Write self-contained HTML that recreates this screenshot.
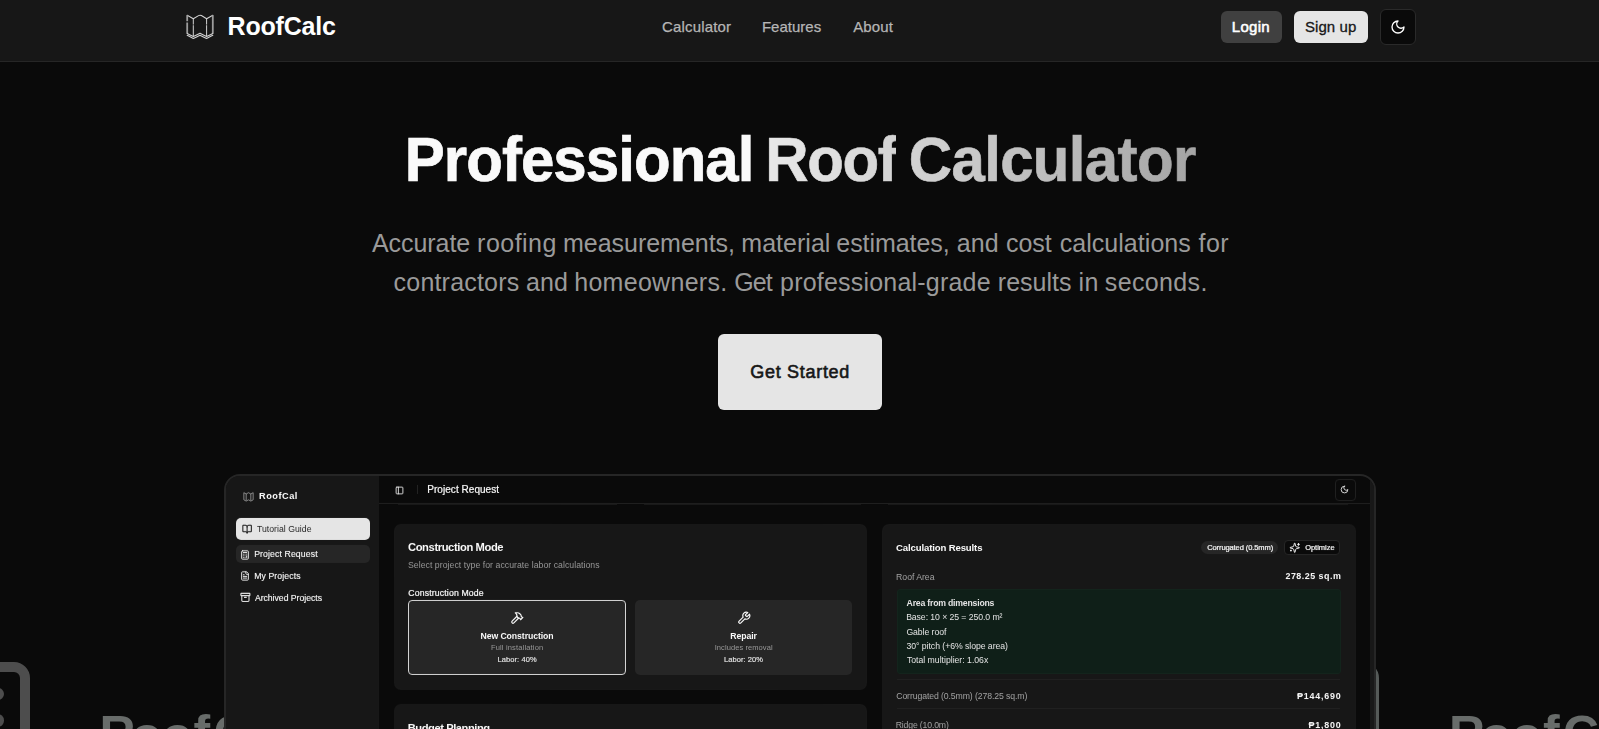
<!DOCTYPE html>
<html><head><meta charset="utf-8">
<style>
*{box-sizing:border-box;margin:0;padding:0}
html,body{width:1599px;height:729px;overflow:hidden;background:#0a0a0a;font-family:"Liberation Sans",sans-serif;color:#fafafa}
.abs{position:absolute}
.t{position:absolute;white-space:nowrap;line-height:1}
#nav{position:absolute;left:0;top:0;width:1599px;height:62px;background:#171717;border-bottom:1px solid #262626}
</style></head>
<body>
<div id="root" style="position:relative;width:1599px;height:729px;overflow:hidden;background:#0a0a0a">
<div id="nav">
  <svg class="abs" style="left:180px;top:8px" width="40" height="36" viewBox="180 8 40 36" fill="none" stroke="#d2d2d2" stroke-width="1.1" stroke-linejoin="round" stroke-linecap="round">
    <path d="M187.2 15.3 L193.3 18.7 L198.6 15.6 Q200 14.8 201.4 15.6 L206.6 18.7 L212.8 15.3"/>
    <path d="M193.3 18.7 V24.2 M193.3 25.6 V35.6 M206.6 18.7 V24.2 M206.6 25.6 V35.6" stroke-width="1"/>
    <path d="M187.2 15.3 V21.2 M187.2 22.6 V33.4 M212.8 15.3 V33.4" stroke="#9c9c9c" stroke-width="1.8" stroke-linecap="butt"/>
    <path d="M187.2 33.4 Q190 35 193.3 36.6 Q196.5 35 200 33.3 Q203.5 35 206.6 36.6 Q210 35 212.8 33.4"/>
    <path d="M187.2 35.3 Q190 36.9 193.3 38.5 Q196.5 36.9 200 35.2 Q203.5 36.9 206.6 38.5 Q210 36.9 212.8 35.3"/>
  </svg>
  <div class="t" id="brand" style="left:227.60px;top:14.2px;font-size:25px;font-weight:bold;color:#fff;letter-spacing:-0.194px">RoofCalc</div>
  <div class="t nl" id="n1" style="left:662.07px;top:19px;letter-spacing:0.155px">Calculator</div>
  <div class="t nl" id="n2" style="left:761.90px;top:19px;letter-spacing:0.017px">Features</div>
  <div class="t nl" id="n3" style="left:853.19px;top:19px;letter-spacing:0.109px">About</div>
  <div class="abs" style="left:1221px;top:11px;width:61px;height:32px;background:#404040;border-radius:6px"></div>
  <div class="t" id="login" style="left:1231.85px;top:19px;font-size:15px;color:#fff;-webkit-text-stroke:0.55px #fff;letter-spacing:0.279px">Login</div>
  <div class="abs" style="left:1294px;top:11px;width:74px;height:32px;background:#e5e5e5;border-radius:6px"></div>
  <div class="t" id="signup" style="left:1304.90px;top:19px;font-size:15px;color:#171717;letter-spacing:0.089px;-webkit-text-stroke:0.3px #171717">Sign up</div>
  <div class="abs" style="left:1380px;top:9px;width:36px;height:36px;background:#0a0a0a;border:1px solid #2a2a2a;border-radius:6px"></div>
  <svg class="abs" style="left:1390px;top:19px" width="16" height="16" viewBox="0 0 24 24" fill="none" stroke="#fff" stroke-width="2" stroke-linecap="round" stroke-linejoin="round"><path d="M12 3a6 6 0 0 0 9 9 9 9 0 1 1-9-9Z"/></svg>
</div>
<style>.nl{font-size:15px;color:#b5b5b5;-webkit-text-stroke:0.25px #b5b5b5}</style>

<div class="t" id="h1a" style="left:404.69px;top:130.6px;font-size:60px;transform:scaleY(1.06);transform-origin:0 50.8px;font-weight:bold;color:#fafafa;letter-spacing:-0.941px;-webkit-text-stroke:0.7px #fafafa">Professional</div>
<div class="t" id="h1b" style="left:765.29px;top:130.6px;font-size:60px;transform:scaleY(1.06);transform-origin:0 50.8px;font-weight:bold;letter-spacing:-1.393px;background:linear-gradient(90deg,#e9e9e9,#d4d4d4);-webkit-background-clip:text;background-clip:text;color:transparent;-webkit-text-stroke:0.7px transparent">Roof</div>
<div class="t" id="h1c" style="left:908.76px;top:130.6px;font-size:60px;transform:scaleY(1.06);transform-origin:0 50.8px;font-weight:bold;letter-spacing:-0.658px;background:linear-gradient(90deg,#d3d3d3,#a5a5a5);-webkit-background-clip:text;background-clip:text;color:transparent;-webkit-text-stroke:0.7px transparent">Calculator</div>

<div class="t sw" id="s1w0" style="left:371.96px;top:230.7px;letter-spacing:-0.058px">Accurate</div>
<div class="t sw" id="s1w1" style="left:477.11px;top:230.7px;letter-spacing:0.465px">roofing</div>
<div class="t sw" id="s1w2" style="left:563.09px;top:230.7px;letter-spacing:-0.035px">measurements,</div>
<div class="t sw" id="s1w3" style="left:741.31px;top:230.7px;letter-spacing:0.027px">material</div>
<div class="t sw" id="s1w4" style="left:836.35px;top:230.7px;letter-spacing:-0.070px">estimates,</div>
<div class="t sw" id="s1w5" style="left:956.68px;top:230.7px;letter-spacing:0.155px">and</div>
<div class="t sw" id="s1w6" style="left:1006.02px;top:230.7px;letter-spacing:-0.047px">cost</div>
<div class="t sw" id="s1w7" style="left:1059.65px;top:230.7px;letter-spacing:0.048px">calculations</div>
<div class="t sw" id="s1w8" style="left:1198.56px;top:230.7px;letter-spacing:0.390px">for</div>
<div class="t sw" id="s2w0" style="left:393.61px;top:270px;letter-spacing:0.189px">contractors</div>
<div class="t sw" id="s2w1" style="left:526.10px;top:270px;letter-spacing:0.018px">and</div>
<div class="t sw" id="s2w2" style="left:574.24px;top:270px;letter-spacing:0.286px">homeowners.</div>
<div class="t sw" id="s2w3" style="left:734.23px;top:270px;letter-spacing:-0.947px">Get</div>
<div class="t sw" id="s2w4" style="left:780.11px;top:270px;letter-spacing:0.199px">professional-grade</div>
<div class="t sw" id="s2w5" style="left:997.80px;top:270px;letter-spacing:0.024px">results</div>
<div class="t sw" id="s2w6" style="left:1078.41px;top:270px;letter-spacing:0.508px">in</div>
<div class="t sw" id="s2w7" style="left:1104.77px;top:270px;letter-spacing:0.367px">seconds.</div>
<style>.sw{font-size:25px;color:#9a9a9a}</style>
<div class="abs" style="left:718px;top:334px;width:164px;height:76px;background:#e5e5e5;border-radius:6px"></div>
<div class="t" id="gs" style="left:750.32px;top:363px;font-size:18px;-webkit-text-stroke:0.6px #171717;color:#171717;letter-spacing:0.697px">Get Started</div>

<!-- marquee bg -->
<div class="abs" style="left:-66px;top:662px;width:96px;height:96px;border:10px solid #4d4d4d;border-radius:16px"></div>
<div class="abs" style="left:-8.8px;top:687.5px;width:12.6px;height:12.6px;border-radius:50%;background:#4d4d4d"></div>
<div class="abs" style="left:-8.8px;top:714px;width:12.6px;height:12.6px;border-radius:50%;background:#4d4d4d"></div>
<div class="abs" style="left:1283px;top:662px;width:96px;height:96px;border:10px solid #555a58;border-radius:16px"></div>

<div class="t mq" id="m10" style="left:99.6px;top:708.9px">R</div>
<div class="t mq" id="m11" style="left:131.6px;top:710px">o</div>
<div class="t mq" id="m12" style="left:162.1px;top:710px">o</div>
<div class="t mq" id="m13" style="left:193.6px">f</div>
<div class="t mq" id="m14" style="left:213.6px;top:708.5px">C</div>
<div class="t mq" id="m15" style="left:249.6px">a</div>
<div class="t mq" id="m20" style="left:1449.0px;top:708.9px">R</div>
<div class="t mq" id="m21" style="left:1481.0px;top:710px">o</div>
<div class="t mq" id="m22" style="left:1511.5px;top:710px">o</div>
<div class="t mq" id="m23" style="left:1543.0px">f</div>
<div class="t mq" id="m24" style="left:1563.0px;top:708.5px">C</div>
<div class="t mq" id="m25" style="left:1599.0px">a</div>
<style>.mq{top:708px;font-size:50px;font-weight:bold;color:#686c6a}</style>
<!-- app card -->
<div id="card" class="abs" style="left:224px;top:474px;width:1152px;height:300px;border:2px solid #262626;border-radius:16px;background:#0a0a0a;overflow:hidden">
<div class="abs" style="left:-226px;top:-476px;width:1599px;height:729px;filter:blur(0.3px);transform:rotate(0.005deg);transform-origin:800px 600px">
  <!-- sidebar -->
  <div class="abs" style="left:226px;top:476px;width:153px;height:260px;background:#171717"></div>
  <div class="abs" style="left:1370px;top:476px;width:4px;height:260px;background:#181818"></div>
  <svg class="abs" style="left:243px;top:492px" width="11" height="10" viewBox="0 0 30 28" fill="none" stroke="#bdbdbd" stroke-width="1.9">
    <path d="M2 2 L8.5 5.5 L15 2 L21.5 5.5 L28 2 V22 L21.5 25.5 L15 22 L8.5 25.5 L2 22 Z"/><path d="M8.5 5.5 V24 M21.5 5.5 V24"/>
  </svg>
  <div class="t" id="sb0" style="left:259.10px;top:492.10px;font-size:9.2px;font-weight:bold;color:#fff;letter-spacing:0.497px">RoofCal</div>
  <div class="abs" style="left:235.5px;top:518px;width:134.5px;height:22px;background:#e5e5e5;border-radius:5px"></div>
  <svg class="abs" style="left:242.4px;top:523.9px" width="10.2" height="10.2" viewBox="0 0 24 24" fill="none" stroke="#171717" stroke-width="2.4" stroke-linecap="round" stroke-linejoin="round"><path d="M12 7v14"/><path d="M3 18a1 1 0 0 1-1-1V4a1 1 0 0 1 1-1h5a4 4 0 0 1 4 4 4 4 0 0 1 4-4h5a1 1 0 0 1 1 1v13a1 1 0 0 1-1 1h-6a3 3 0 0 0-3 3 3 3 0 0 0-3-3z"/></svg>
  <div class="t sbi" id="sb1" style="left:256.93px;top:524.5px;color:#262626;letter-spacing:0.027px">Tutorial Guide</div>
  <div class="abs" style="left:235.5px;top:544.6px;width:134.5px;height:18.8px;background:#262626;border-radius:5px"></div>
  <svg class="abs" style="left:240px;top:549.5px" width="10" height="10" viewBox="0 0 24 24" fill="none" stroke="#e5e5e5" stroke-width="2.4" stroke-linecap="round" stroke-linejoin="round"><rect x="4" y="2" width="16" height="20" rx="2"/><path d="M8 6h8M16 14v4M16 10h.01M12 10h.01M8 10h.01M12 14h.01M8 14h.01M12 18h.01M8 18h.01"/></svg>
  <div class="t sbi" id="sb2" style="left:254.16px;top:550.40px;color:#fafafa;letter-spacing:0.114px;-webkit-text-stroke:0.12px #fafafa">Project Request</div>
  <svg class="abs" style="left:240px;top:570.8px" width="10" height="10" viewBox="0 0 24 24" fill="none" stroke="#e5e5e5" stroke-width="2.4" stroke-linecap="round" stroke-linejoin="round"><path d="M15 2H6a2 2 0 0 0-2 2v16a2 2 0 0 0 2 2h12a2 2 0 0 0 2-2V7Z"/><path d="M14 2v4a2 2 0 0 0 2 2h4M10 9H8M16 13H8M16 17H8"/></svg>
  <div class="t sbi" id="sb3" style="left:254.17px;top:571.5px;color:#fafafa;letter-spacing:0.104px;-webkit-text-stroke:0.12px #fafafa">My Projects</div>
  <svg class="abs" style="left:240.2px;top:592.1px" width="10.8" height="10.8" viewBox="0 0 24 24" fill="none" stroke="#e5e5e5" stroke-width="2.4" stroke-linecap="round" stroke-linejoin="round"><rect width="20" height="5" x="2" y="3" rx="1"/><path d="M4 8v11a2 2 0 0 0 2 2h12a2 2 0 0 0 2-2V8M10 12h4"/></svg>
  <div class="t sbi" id="sb4" style="left:254.88px;top:593.80px;color:#fafafa;letter-spacing:-0.030px;-webkit-text-stroke:0.12px #fafafa">Archived Projects</div>

  <!-- header -->
  <div class="abs" style="left:379px;top:503px;width:991px;height:1px;background:#1e1e1e"></div><div class="abs" style="left:398px;top:504px;width:219px;height:1px;background:#181818"></div><div class="abs" style="left:644px;top:504px;width:217px;height:1px;background:#181818"></div><div class="abs" style="left:888px;top:504px;width:460px;height:1px;background:#181818"></div>
  <svg class="abs" style="left:395px;top:485.5px" width="9" height="9" viewBox="0 0 24 24" fill="none" stroke="#e5e5e5" stroke-width="2.4" stroke-linecap="round" stroke-linejoin="round"><rect width="18" height="18" x="3" y="3" rx="2"/><path d="M9 3v18"/></svg>
  <div class="abs" style="left:417px;top:485px;width:1px;height:9px;background:#222"></div>
  <div class="t" id="hd" style="left:427.29px;top:484.5px;font-size:10px;color:#fafafa;letter-spacing:0.042px;-webkit-text-stroke:0.2px #fafafa">Project Request</div>
  <div class="abs" style="left:1334.5px;top:479px;width:21.5px;height:21.5px;border:1px solid #1f1f1f;border-radius:4px;background:#0a0a0a"></div>
  <svg class="abs" style="left:1340.2px;top:484.8px" width="9" height="9" viewBox="0 0 24 24" fill="none" stroke="#e5e5e5" stroke-width="2.4" stroke-linecap="round" stroke-linejoin="round"><path d="M12 3a6 6 0 0 0 9 9 9 9 0 1 1-9-9Z"/></svg>

  <!-- construction mode card -->
  <div class="abs" style="left:393.5px;top:524px;width:473.5px;height:165.5px;background:#171717;border-radius:7px"></div>
  <div class="t" id="c1" style="left:408.01px;top:541.5px;font-size:11.2px;font-weight:bold;color:#fafafa;letter-spacing:-0.397px">Construction Mode</div>
  <div class="t" id="c2" style="left:407.97px;top:561px;font-size:8.7px;color:#989898;letter-spacing:0.046px">Select project type for accurate labor calculations</div>
  <div class="t" id="c3" style="left:408.28px;top:588.5px;font-size:8.7px;color:#fafafa;letter-spacing:0.153px;-webkit-text-stroke:0.2px #fafafa">Construction Mode</div>
  <div class="abs" style="left:408.3px;top:600px;width:217.4px;height:75px;background:#262626;border:1px solid #d4d4d4;border-radius:4px"></div>
  <svg class="abs" style="left:510.2px;top:611px" width="14" height="14" viewBox="0 0 24 24" fill="none" stroke="#fafafa" stroke-width="2" stroke-linecap="round" stroke-linejoin="round"><path d="m15 12-8.373 8.373a1 1 0 1 1-3-3L12 9"/><path d="m18 15 4-4"/><path d="m21.5 11.500-1.914-1.914A2 2 0 0 1 19 8.172V7l-2.260-2.260a6 6 0 0 0-4.202-1.756L9 2.960l.920.820A6.180 6.180 0 0 1 12 8.400V10l2 2h1.172a2 2 0 0 1 1.414.586L18.500 14.500"/></svg>
  <div class="t" id="b1" style="left:480.44px;top:632px;font-size:8.7px;font-weight:bold;color:#fafafa;letter-spacing:-0.074px">New Construction</div>
  <div class="t" id="b2" style="left:490.96px;top:644px;font-size:7.5px;color:#989898;letter-spacing:0.162px">Full installation</div>
  <div class="t" id="b3" style="left:497.55px;top:656px;font-size:7.5px;color:#e5e5e5;letter-spacing:0.071px;-webkit-text-stroke:0.15px #e5e5e5">Labor: 40%</div>
  <div class="abs" style="left:635px;top:600px;width:217.4px;height:75px;background:#262626;border-radius:5px"></div>
  <svg class="abs" style="left:737px;top:610.6px" width="14" height="14" viewBox="0 0 24 24" fill="none" stroke="#fafafa" stroke-width="2" stroke-linecap="round" stroke-linejoin="round"><path d="M14.700 6.300a1 1 0 0 0 0 1.400l1.600 1.600a1 1 0 0 0 1.400 0l3.770-3.770a6 6 0 0 1-7.940 7.940l-6.910 6.910a2.120 2.120 0 0 1-3-3l6.910-6.910a6 6 0 0 1 7.940-7.940l-3.760 3.760z"/></svg>
  <div class="t" id="r1" style="left:730.25px;top:632px;font-size:8.7px;font-weight:bold;color:#fafafa;letter-spacing:-0.065px">Repair</div>
  <div class="t" id="r2" style="left:714.68px;top:644px;font-size:7.5px;color:#989898;letter-spacing:0.080px">Includes removal</div>
  <div class="t" id="r3" style="left:724.11px;top:656px;font-size:7.5px;color:#e5e5e5;letter-spacing:0.055px;-webkit-text-stroke:0.15px #e5e5e5">Labor: 20%</div>
  <!-- budget card -->
  <div class="abs" style="left:393.5px;top:704px;width:473.5px;height:60px;background:#171717;border-radius:7px"></div>
  <div class="t" id="bp" style="left:407.73px;top:722.5px;font-size:11.2px;font-weight:bold;color:#fafafa;letter-spacing:-0.459px">Budget Planning</div>

  <!-- results card -->
  <div class="abs" style="left:882px;top:524px;width:474px;height:240px;background:#171717;border-radius:7px"></div>
  <div class="t" id="q1" style="left:896.09px;top:542.60px;font-size:9.6px;font-weight:bold;color:#fafafa;letter-spacing:-0.146px">Calculation Results</div>
  <div class="abs" style="left:1200.8px;top:540.8px;width:77px;height:13.2px;background:#262626;border-radius:6.6px"></div>
  <div class="t" id="q2" style="left:1207.18px;top:544px;font-size:7.5px;color:#fafafa;letter-spacing:-0.092px;-webkit-text-stroke:0.2px #fafafa">Corrugated (0.5mm)</div>
  <div class="abs" style="left:1283.7px;top:539.5px;width:56.5px;height:15.5px;background:#0a0a0a;border:1px solid #262626;border-radius:4px"></div>
  <svg class="abs" style="left:1288.8px;top:542.2px" width="11.4" height="11.4" viewBox="0 0 24 24" fill="none" stroke="#fafafa" stroke-width="2" stroke-linecap="round" stroke-linejoin="round"><path d="M9.937 15.500A2 2 0 0 0 8.500 14.063l-6.135-1.582a.5.5 0 0 1 0-.962L8.500 9.936A2 2 0 0 0 9.937 8.500l1.582-6.135a.5.5 0 0 1 .963 0L14.063 8.500A2 2 0 0 0 15.500 9.937l6.135 1.581a.5.5 0 0 1 0 .964L15.500 14.063a2 2 0 0 0-1.437 1.437l-1.582 6.135a.5.5 0 0 1-.963 0z"/><path d="M20 3v4M22 5h-4M4 17v2M5 18H3"/></svg>
  <div class="t" id="q3" style="left:1305.16px;top:544px;font-size:7.5px;color:#fafafa;-webkit-text-stroke:0.2px #fafafa;letter-spacing:-0.020px">Optimize</div>
  <div class="t" id="q4" style="left:896.12px;top:572.80px;font-size:8.7px;color:#a3a3a3;letter-spacing:-0.031px">Roof Area</div>
  <div class="t" id="q5" style="right:257.69px;top:572.40px;font-size:8.9px;font-weight:bold;color:#fafafa;letter-spacing:0.501px">278.25 sq.m</div>
  <div class="abs" style="left:897px;top:589.3px;width:443.8px;height:85px;background:#0f1f18;border:1px solid #13241c;border-radius:3px"></div>
  <div class="t g" id="g1" style="left:906.62px;top:599px;font-weight:bold;letter-spacing:-0.206px">Area from dimensions</div>
  <div class="t g" id="g2" style="left:906.14px;top:613.3px;letter-spacing:-0.074px">Base: 10 × 25 = 250.0 m²</div>
  <div class="t g" id="g3" style="left:906.42px;top:627.6px;letter-spacing:-0.071px">Gable roof</div>
  <div class="t g" id="g4" style="left:906.47px;top:642px;letter-spacing:-0.049px">30° pitch (+6% slope area)</div>
  <div class="t g" id="g5" style="left:906.90px;top:656.3px;letter-spacing:-0.010px">Total multiplier: 1.06x</div>
  <div class="abs" style="left:897px;top:679px;width:443px;height:1px;background:#202020"></div>
  <div class="t" id="w1" style="left:896.23px;top:691.70px;font-size:8.7px;color:#a3a3a3;letter-spacing:-0.100px">Corrugated (0.5mm) (278.25 sq.m)</div>
  <div class="t" id="w2" style="right:257.37px;top:691.70px;font-size:8.9px;font-weight:bold;color:#fafafa;letter-spacing:0.831px">₱144,690</div>
  <div class="abs" style="left:897px;top:708px;width:443px;height:1px;background:#202020"></div>
  <div class="t" id="w3" style="left:895.75px;top:721.00px;font-size:8.7px;color:#a3a3a3;letter-spacing:-0.167px">Ridge (10.0m)</div>
  <div class="t" id="w4" style="right:257.42px;top:720.70px;font-size:8.9px;font-weight:bold;color:#fafafa;letter-spacing:0.818px">₱1,800</div>
</div>
</div>
<style>.sbi{font-size:8.7px}.g{font-size:8.7px;color:#e5e5e5}</style>
</div>
</body></html>
